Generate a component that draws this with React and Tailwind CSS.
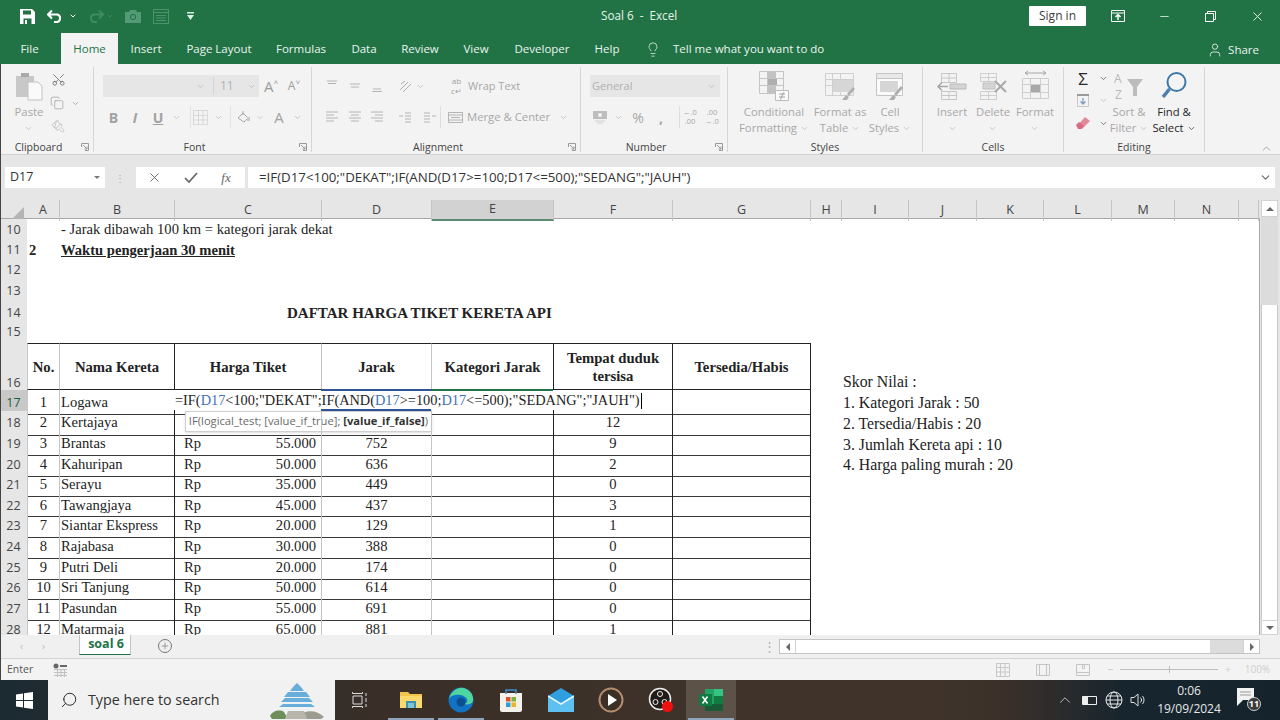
import {
  ChevronDown,
  ChevronUp,
  Copy,
  Lightbulb,
  Minus,
  Paintbrush,
  Plus,
  Scissors,
  Search,
  User,
  X,
} from "lucide-react"

const SERIF = "[font-family:'Liberation_Serif',serif]"
const COLS =
  "grid grid-cols-[27px_33px_115px_147px_110px_122px_119px_138px_31px_67px_68px_67px_68px_63px_64px_20px]"

const BORDER_A = "border-l border-l-[#c8c8c8] border-r border-r-[#c4c4c4]"
const BORDER_B = "border-r border-r-[#222]"
const BORDER_C = "border-r border-r-[#c4c4c4]"
const BORDER_D = "border-r border-r-[#c4c4c4]"
const BORDER_E = "border-r border-r-[#222]"
const BORDER_F = "border-r border-r-[#222]"
const BORDER_G = "border-r border-r-[#222]"

const TRAINS = [
  [3, "Brantas", "55.000", 752, 9],
  [4, "Kahuripan", "50.000", 636, 2],
  [5, "Serayu", "35.000", 449, 0],
  [6, "Tawangjaya", "45.000", 437, 3],
  [7, "Siantar Ekspress", "20.000", 129, 1],
  [8, "Rajabasa", "30.000", 388, 0],
  [9, "Putri Deli", "20.000", 174, 0],
  [10, "Sri Tanjung", "50.000", 614, 0],
  [11, "Pasundan", "55.000", 691, 0],
  [12, "Matarmaja", "65.000", 881, 1],
]

const SCORES = {
  17: "1. Kategori Jarak : 50",
  18: "2. Tersedia/Habis : 20",
  19: "3. Jumlah Kereta api : 10",
  20: "4. Harga paling murah : 20",
}

function Caret({ className = "text-[#b8b8b8]" }) {
  return <ChevronDown size={9} strokeWidth={2} className={className} />
}

function Slot({ className = "", children }) {
  return <div className={`flex shrink-0 items-center justify-center ${className}`}>{children}</div>
}

function Lines({ rows, color = "#b4b4b4", size = 14 }) {
  return (
    <svg width={size} height={size} viewBox="0 0 14 14" stroke={color} strokeWidth="1">
      {rows.map(([a, b, y]) => (
        <line key={`${a}-${y}`} x1={a} x2={b} y1={y} y2={y} />
      ))}
    </svg>
  )
}

function Launcher() {
  return (
    <svg width="8" height="8" viewBox="0 0 8 8" fill="none" stroke="#9a9a9a" strokeWidth="1">
      <path d="M.5 4V.5H7.5V7.5H4M2 2l4 4M6 3.5V6H3.5" />
    </svg>
  )
}

function Group({ className, pad = "", label, launcher, children }) {
  return (
    <div className={`mt-[3px] h-[85px] shrink-0 border-r border-r-[#d6d6d6] ${className}`}>
      <div className={`flex h-[73px] flex-col ${pad}`}>{children}</div>
      <div className={`relative h-[12px] text-center text-[10.5px] leading-[14px] text-[#444] ${launcher ? "pr-[16px]" : ""}`}>
        {label}
        {launcher && (
          <span className="absolute right-[4px] top-[3px] flex">
            <Launcher />
          </span>
        )}
      </div>
    </div>
  )
}

function BigButton({ className, icon, lines, caret, dark }) {
  const color = dark ? "text-[#262626]" : "text-[#a8a8a8]"
  return (
    <div className={`flex shrink-0 flex-col items-center ${className}`}>
      <div className="flex h-[37px] items-center justify-center">{icon}</div>
      <div className={`text-center text-[11.3px] leading-[16px] whitespace-nowrap ${color}`}>
        {lines.map((line, i) => (
          <div key={line} className="flex items-center justify-center gap-[3px]">
            {line}
            {caret && i === lines.length - 1 && <Caret className={dark ? "text-[#444]" : "text-[#b8b8b8]"} />}
          </div>
        ))}
        {lines.length === 1 && (
          <div className="flex h-[16px] items-center justify-center">
            <Caret />
          </div>
        )}
      </div>
    </div>
  )
}

function GridIcon({ children, w = 32, h = 32 }) {
  return (
    <svg width={w} height={h} viewBox="0 0 32 32" fill="none">
      {children}
    </svg>
  )
}

function TitleBar() {
  return (
    <div className="flex h-8 shrink-0 items-center text-[#e8f3ec]">
      <div className="flex w-[601px] items-center">
        <Slot className="ml-[19px] w-4">
          <svg width="15" height="15" viewBox="0 0 15 15">
            <path d="M0 0h12l3 3v12H0z" fill="#fff" />
            <path d="M3 1.5h8v4H3zM3.5 9.5h8V15h-8z" fill="#217346" />
            <path d="M5 11h2v4H5z" fill="#fff" />
          </svg>
        </Slot>
        <svg className="ml-[12px]" width="16" height="14" viewBox="0 0 16 14" fill="none" stroke="#fff" strokeWidth="2">
          <path d="M1.5 5.5h9a4 4 0 0 1 0 7.5H7M5 1.5l-4 4 4 4" />
        </svg>
        <Slot className="ml-[5px] w-[10px]">
          <ChevronDown size={8} strokeWidth={3} className="text-white" />
        </Slot>
        <svg className="ml-[10px]" width="16" height="14" viewBox="0 0 16 14" fill="none" stroke="#3f8a62" strokeWidth="2">
          <path d="M14.5 5.5h-9a4 4 0 0 0 0 7.5H9M11 1.5l4 4-4 4" />
        </svg>
        <Slot className="ml-[2px] w-[8px]">
          <ChevronDown size={8} strokeWidth={3} className="text-[#3f8a62]" />
        </Slot>
        <svg className="ml-[11px]" width="16" height="13" viewBox="0 0 16 13" fill="#559a77">
          <path d="M0 2h4l1-2h6l1 2h4v11H0z" />
          <circle cx="8" cy="7" r="3" fill="#217346" />
          <circle cx="8" cy="7" r="2" />
        </svg>
        <svg className="ml-[12px]" width="16" height="15" viewBox="0 0 16 15" fill="none" stroke="#4c9470" strokeWidth="1">
          <path d="M.5.5h15v14H.5zM.5 3.500h15M3 6.500h10M3 9h10M3 11.500h10" />
        </svg>
        <svg className="ml-[18px]" width="7" height="8" viewBox="0 0 7 8" fill="#dcefe4">
          <path d="M0 0h7v1.500H0zM0 3h7L3.500 8z" />
        </svg>
      </div>
      <div className="text-[11.7px] whitespace-pre">Soal 6  -  Excel</div>
      <div className="ml-auto flex items-center">
        <div className="flex h-[20px] w-[57px] items-center justify-center rounded-[1px] bg-white text-[12px] text-[#3c3c3c]">
          Sign in
        </div>
        <Slot className="ml-[21px] w-[22px]">
          <svg width="14" height="12" viewBox="0 0 14 12" fill="none" stroke="#fff">
            <path d="M.5.5h13v11H.5zM.5 3h13" />
            <path d="M7 10V5M4.500 7L7 4.500 9.500 7" strokeWidth="1.500" />
          </svg>
        </Slot>
        <Slot className="ml-[24px] w-[22px]">
          <Minus size={13} strokeWidth={1.5} />
        </Slot>
        <Slot className="ml-[24px] w-[22px]">
          <svg width="11" height="11" viewBox="0 0 11 11" fill="none" stroke="#fff">
            <path d="M.5 2.500h8v8h-8zM2.500 2.500v-2h8v8h-2" />
          </svg>
        </Slot>
        <Slot className="ml-[25px] mr-[12px] w-[22px]">
          <X size={15} strokeWidth={1.5} />
        </Slot>
      </div>
    </div>
  )
}

function Tab({ className = "", children }) {
  return <div className={`flex h-full shrink-0 items-center justify-center ${className}`}>{children}</div>
}

function TabBar() {
  return (
    <div className="flex h-8 shrink-0 items-end text-[11.5px] text-[#eaf4ee]">
      <div className="flex h-[32px] items-center">
        <Tab className="w-[59px] pt-[2px]">File</Tab>
        <Tab className="ml-[2px] mt-[2px] h-[30px] w-[57px] bg-[#f3f3f3] text-[#217346]">Home</Tab>
        <Tab className="w-[56px] pt-[2px]">Insert</Tab>
        <Tab className="w-[90px] pt-[2px]">Page Layout</Tab>
        <Tab className="w-[74px] pt-[2px]">Formulas</Tab>
        <Tab className="w-[52px] pt-[2px]">Data</Tab>
        <Tab className="w-[60px] pt-[2px]">Review</Tab>
        <Tab className="w-[52px] pt-[2px]">View</Tab>
        <Tab className="w-[80px] pt-[2px]">Developer</Tab>
        <Tab className="w-[50px] pt-[2px]">Help</Tab>
        <Tab className="ml-[13px] w-[16px] pt-[2px]">
          <Lightbulb size={19} strokeWidth={1.1} />
        </Tab>
        <div className="ml-[12px] whitespace-nowrap pt-[2px]">Tell me what you want to do</div>
      </div>
      <div className="ml-auto mr-[21px] flex h-[32px] items-center gap-[5px] pt-[3px]">
        <User size={16} strokeWidth={1.25} />
        Share
      </div>
    </div>
  )
}

function ClipboardGroup() {
  return (
    <Group className="w-[94px]" pad="pl-[12px] pr-[8px]" label="Clipboard" launcher>
      <div className="flex">
        <BigButton
          className="w-[34px]"
          lines={["Paste"]}
          icon={
            <svg width="30" height="30" viewBox="0 0 30 30">
              <path d="M2 5h18v21H2z" fill="#c8c8c8" />
              <path d="M7 2h8v4H7z" fill="#a9a9a9" />
              <path d="M14 11h10l4 4v14H14z" fill="#fafafa" stroke="#c2c2c2" />
            </svg>
          }
        />
        <div className="ml-[4px] flex flex-col items-start">
          <Slot className="mt-[2px] h-[20px] w-[16px]">
            <Scissors size={15} strokeWidth={1.25} className="-rotate-90 text-[#666]" />
          </Slot>
          <div className="mt-[4px] flex h-[20px] items-center gap-[7px]">
            <Copy size={14} strokeWidth={1} className="text-[#8c8c8c]" />
            <Caret className="text-[#999]" />
          </div>
          <Slot className="mt-[3px] h-[20px] w-[16px]">
            <Paintbrush size={14} strokeWidth={1.25} className="rotate-90 text-[#b5b5b5]" />
          </Slot>
        </div>
      </div>
    </Group>
  )
}

function FontGroup() {
  return (
    <Group className="w-[218px]" pad="pl-[9px]" label="Font" launcher>
      <div className="mt-[8px] flex h-[22px]">
        <div className="flex h-[22px] w-[156px] items-center justify-end bg-[#e6e6e6] pr-[3px] text-[12px] text-[#b4b4b4]">
          <Caret />
          <span className="ml-[8px] w-[34px] border-l border-l-[#d4d4d4] pl-[6px]">11</span>
          <Caret />
        </div>
        <Slot className="w-[24px] text-[15px] text-[#9c9c9c]">
          A<span className="-mt-[8px] text-[8px]">˄</span>
        </Slot>
        <Slot className="w-[22px] text-[12px] text-[#9c9c9c]">
          A<span className="-mt-[8px] text-[8px]">˅</span>
        </Slot>
      </div>
      <div className="mt-[9px] flex h-[22px] text-[#a2a2a2]">
        <Slot className="w-[21px] text-[14px] font-bold">B</Slot>
        <Slot className="w-[22px] text-[14px] font-bold italic">I</Slot>
        <Slot className="w-[24px] text-[14px] font-bold underline">U</Slot>
        <Slot className="w-[12px]">
          <Caret />
        </Slot>
        <Slot className="ml-[8px] w-[20px] border-l border-l-[#e2e2e2]">
          <svg width="15" height="15" viewBox="0 0 15 15" fill="none" stroke="#c0c0c0" strokeDasharray="1 1">
            <path d="M.5.5h14v14H.5zM5.500.5v14M10 .5v14M.5 5.500h14M.5 10h14" />
          </svg>
        </Slot>
        <Slot className="w-[16px]">
          <Caret />
        </Slot>
        <Slot className="ml-[4px] w-[26px] border-l border-l-[#e2e2e2]">
          <svg width="15" height="15" viewBox="0 0 15 15" fill="none" stroke="#a8a8a8">
            <path d="M2 8l5-5 5 5-4 4z" />
            <path d="M7 1v4" />
            <rect x="11" y="7" width="3" height="4" fill="#c9c9c9" stroke="none" />
          </svg>
        </Slot>
        <Slot className="w-[8px]">
          <Caret />
        </Slot>
        <Slot className="ml-[2px] w-[26px] text-[15px]">A</Slot>
        <Slot className="w-[10px]">
          <Caret />
        </Slot>
      </div>
    </Group>
  )
}

const TOP = [[2, 12, 2], [3, 11, 4.5]]
const MIDDLE = [[2, 12, 5], [3, 11, 8]]
const BOTTOM = [[3, 11, 10], [2, 12, 12.5]]
const LEFT = [[1, 13, 2], [1, 9, 5], [1, 13, 8], [1, 9, 11]]
const CENTER = [[1, 13, 2], [3, 11, 5], [1, 13, 8], [3, 11, 11]]
const RIGHT = [[1, 13, 2], [5, 13, 5], [1, 13, 8], [5, 13, 11]]

function AlignmentGroup() {
  return (
    <Group className="w-[269px]" pad="pl-[9px]" label="Alignment" launcher>
      <div className="mt-[8px] flex h-[22px]">
        <Slot className="w-[22px]"><Lines rows={TOP} /></Slot>
        <Slot className="w-[23px]"><Lines rows={MIDDLE} /></Slot>
        <Slot className="w-[22px]"><Lines rows={BOTTOM} /></Slot>
        <Slot className="ml-[9px] w-[16px]">
          <svg width="15" height="15" viewBox="0 0 15 15" fill="none" stroke="#b0b0b0">
            <path d="M2 11L10 3M5 13l8-8M3 5l4-3" />
          </svg>
        </Slot>
        <Slot className="w-[14px]"><Caret /></Slot>
        <Slot className="ml-[22px] w-[15px] text-[8px] leading-[10px] text-[#9e9e9e]">
          <span className="text-center">ab<br />c↵</span>
        </Slot>
        <span className="ml-[4px] flex items-center text-[11px] text-[#a8a8a8]">Wrap Text</span>
      </div>
      <div className="mt-[9px] flex h-[22px]">
        <Slot className="w-[22px]"><Lines rows={LEFT} /></Slot>
        <Slot className="w-[23px]"><Lines rows={CENTER} /></Slot>
        <Slot className="w-[22px]"><Lines rows={RIGHT} /></Slot>
        <Slot className="ml-[6px] w-[22px]">
          <Lines rows={[[7, 13, 3], [7, 13, 6], [7, 13, 9], [1, 5, 6], [7, 13, 12]]} />
        </Slot>
        <Slot className="ml-[3px] w-[22px] border-r border-r-[#dedede]">
          <Lines rows={[[1, 7, 3], [1, 7, 6], [1, 7, 9], [9, 13, 6], [1, 7, 12]]} />
        </Slot>
        <Slot className="ml-[7px] w-[15px]">
          <svg width="15" height="15" viewBox="0 0 15 15" fill="none" stroke="#b4b4b4">
            <path d="M.5 2.500h14v10H.5zM.5 5h14M.5 10h14M3 7.500h9" />
          </svg>
        </Slot>
        <span className="ml-[4px] flex w-[84px] items-center text-[11.3px] whitespace-nowrap text-[#a8a8a8]">Merge &amp; Center</span>
        <Slot className="ml-[8px] w-[9px]"><Caret /></Slot>
      </div>
    </Group>
  )
}

function NumberGroup() {
  return (
    <Group className="w-[147px]" pad="pl-[9px]" label="Number" launcher>
      <div className="mt-[8px] flex h-[22px] w-[130px] items-center justify-between bg-[#e6e6e6] pl-[2px] pr-[4px] text-[11px] text-[#b0b0b0]">
        General
        <Caret />
      </div>
      <div className="mt-[9px] flex h-[22px] text-[#a8a8a8]">
        <Slot className="w-[20px]">
          <svg width="16" height="14" viewBox="0 0 16 14">
            <path d="M1 1h14v8H1z" fill="#bdbdbd" />
            <circle cx="8" cy="5" r="2" fill="#f3f3f3" />
            <path d="M3 11h10M5 13h6" stroke="#d0d0d0" />
          </svg>
        </Slot>
        <Slot className="w-[16px]"><Caret /></Slot>
        <Slot className="ml-[1px] w-[22px] text-[14px]">%</Slot>
        <Slot className="ml-[1px] w-[22px] text-[14px] font-bold">,</Slot>
        <Slot className="ml-[2px] w-[6px] border-r border-r-[#dedede]" />
        <Slot className="w-[20px] text-[7.5px] leading-[9.5px]"><span className="text-center">←.0<br />.00</span></Slot>
        <Slot className="ml-[2px] w-[20px] text-[7.5px] leading-[9.5px]"><span className="text-center">.00<br />→.0</span></Slot>
      </div>
    </Group>
  )
}

function StylesGroup() {
  return (
    <Group className="w-[195px]" pad="pl-[9px]" label="Styles">
      <div className="flex">
        <BigButton
          className="w-[74px]"
          caret
          lines={["Conditional", "Formatting"]}
          icon={
            <GridIcon>
              <path d="M1.500 1.500h24v22h-24zM1.500 8.500h24M1.500 15.500h24M9.500 1.500v22M17.500 1.500v22" stroke="#c4c4c4" />
              <path d="M10 2h7v6h-7zM10 16h7v7h-7z" fill="#c2c2c2" />
              <path d="M10 9h9v6h-9z" fill="#aeaeae" />
              <path d="M17.500 20.500h13v10h-13z" fill="#fafafa" stroke="#bcbcbc" />
              <path d="M21 24h6M21 27h6M25.500 22.500l-3 7" stroke="#a0a0a0" />
            </GridIcon>
          }
        />
        <BigButton
          className="w-[58px]"
          caret
          lines={["Format as", "Table"]}
          icon={
            <GridIcon>
              <path d="M1.500 3.500h28v22h-28zM1.500 9.500h28M1.500 15.500h28M8.500 3.500v22M16.500 3.500v22" stroke="#cfcfcf" />
              <path d="M9 10h20v12H9z" fill="#d6d6d6" />
              <path d="M18 30l4-5 3 2-2 3zM23 24l6-7 2 2-6 7z" fill="#b0b0b0" />
            </GridIcon>
          }
        />
        <BigButton
          className="w-[42px]"
          caret
          lines={["Cell", "Styles"]}
          icon={
            <GridIcon>
              <path d="M2.500 3.500h26v22h-26z" fill="#fafafa" stroke="#c4c4c4" />
              <path d="M2.500 3.500h26v5h-26z" fill="#e8e8e8" stroke="#c4c4c4" />
              <path d="M6 11h18v11H6z" fill="#d6d6d6" />
              <path d="M15 30l4-5 3 2-2 3zM20 24l7-8 2 2-7 8z" fill="#adadad" />
            </GridIcon>
          }
        />
      </div>
    </Group>
  )
}

function CellsGroup() {
  return (
    <Group className="w-[141px]" pad="pl-[9px]" label="Cells">
      <div className="flex">
        <BigButton
          className="w-[40px]"
          lines={["Insert"]}
          icon={
            <GridIcon>
              <path d="M5.500 3.500h15v9h-15zM5.500 21.500h15v8h-15zM13 3.500v9M13 21.500v8M5.500 8h15M5.500 25.500h15" stroke="#c6c6c6" />
              <path d="M14 14h16v5H14z" fill="#d4d4d4" stroke="#b8b8b8" />
              <path d="M12 16.500H2M6 12.500l-4 4 4 4" stroke="#a8a8a8" strokeWidth="1.500" />
            </GridIcon>
          }
        />
        <BigButton
          className="w-[42px]"
          lines={["Delete"]}
          icon={
            <GridIcon>
              <path d="M3.500 3.500h16v8h-16zM3.500 21.500h16v8h-16zM11.500 3.500v8M11.500 21.500v8M3.500 25.500h16M3.500 7.500h16" stroke="#cecece" />
              <path d="M6 13h12v6H6z" fill="#d4d4d4" stroke="#c0c0c0" />
              <path d="M18 11l11 11M29 11L18 22" stroke="#a8a8a8" strokeWidth="2" />
            </GridIcon>
          }
        />
        <BigButton
          className="w-[42px]"
          lines={["Format"]}
          icon={
            <GridIcon>
              <path d="M3.500 8.500h26v20h-26zM3.500 14.500h26M3.500 22.500h26M11.500 8.500v20M21.500 8.500v20" stroke="#cecece" />
              <path d="M12 15h9v7h-9z" fill="#a8a8a8" />
              <path d="M6 3h21M9 1L6 3l3 2M24 1l3 2-3 2" stroke="#a8a8a8" />
            </GridIcon>
          }
        />
      </div>
    </Group>
  )
}

function EditingGroup() {
  return (
    <Group className="w-[141px]" pad="pl-[8px]" label="Editing">
      <div className="flex">
        <div className="w-[38px] pl-[3px]">
          <div className="flex h-[22px] items-center gap-[8px]">
            <span className="w-[16px] text-center text-[17px] leading-none text-[#262626]">Σ</span>
            <Caret className="text-[#555]" />
          </div>
          <div className="flex h-[22px] items-center gap-[8px]">
            <svg width="16" height="16" viewBox="0 0 16 16" fill="none">
              <path d="M2.500 2.500h11v12h-11z" stroke="#c8c8c8" />
              <path d="M2 2h12v2H2z" fill="#9a9a9a" />
              <path d="M8 6v6M5.500 9.500L8 12l2.500-2.500" stroke="#7d9ab8" strokeWidth="1.250" />
            </svg>
            <Caret />
          </div>
          <div className="flex h-[24px] items-center gap-[8px]">
            <svg width="16" height="14" viewBox="0 0 16 14">
              <path d="M10 1l5 4-8 8-5-3z" fill="#e08a9c" />
              <path d="M1 9l3-3 5 4-3 3H3z" fill="#d86a82" />
            </svg>
            <Caret className="text-[#555]" />
          </div>
        </div>
        <BigButton
          className="w-[38px]"
          caret
          lines={["Sort &", "Filter"]}
          icon={
            <svg width="32" height="30" viewBox="0 0 32 30">
              <text x="1" y="12" fontSize="12" fill="#b8b8b8" fontFamily="Open Sans">A</text>
              <text x="2" y="28" fontSize="12" fill="#b8b8b8" fontFamily="Open Sans">Z</text>
              <path d="M14 8h16l-6 8v9h-4v-9z" fill="#bcbcbc" />
            </svg>
          }
        />
        <BigButton
          className="w-[52px]"
          dark
          caret
          lines={["Find &", "Select"]}
          icon={
            <svg width="28" height="30" viewBox="0 0 28 30" fill="none">
              <circle cx="16.500" cy="11" r="9" stroke="#3f78a8" strokeWidth="2" />
              <path d="M9.500 18L3 26" stroke="#4a7fae" strokeWidth="3.500" />
            </svg>
          }
        />
      </div>
    </Group>
  )
}

function Ribbon() {
  return (
    <div className="relative flex h-[91px] shrink-0 border-b border-b-[#d2d2d2] bg-[#f3f3f3]">
      <ClipboardGroup />
      <FontGroup />
      <AlignmentGroup />
      <NumberGroup />
      <StylesGroup />
      <CellsGroup />
      <EditingGroup />
      <ChevronUp size={13} strokeWidth={1} className="absolute bottom-[-1px] right-[7px] text-[#666]" />
    </div>
  )
}

function FormulaBar() {
  return (
    <div className="flex h-[45px] shrink-0 bg-[#e6e6e6] pt-[12px]">
      <div className="ml-[5px] flex h-[21px] w-[100px] items-center justify-between bg-white pl-[5px] pr-[5px] text-[12.5px] text-[#333]">
        D17
        <svg width="6" height="3" viewBox="0 0 6 3" fill="#777"><path d="M0 0h6L3 3z" /></svg>
      </div>
      <div className="ml-[10px] mr-[11px] flex h-[21px] w-[10px] items-center justify-center text-[10px] leading-none text-[#aaa]">⋮</div>
      <div className="flex h-[21px] w-[109px] items-center bg-white text-[#666]">
        <Slot className="ml-[9px] w-[18px]"><X size={15} strokeWidth={1.5} /></Slot>
        <Slot className="ml-[19px] w-[18px]">
          <svg width="14" height="12" viewBox="0 0 14 12" fill="none" stroke="#666" strokeWidth="1.750">
            <path d="M1 6l4 4 8-9" />
          </svg>
        </Slot>
        <Slot className="ml-[17px] w-[18px] text-[13px] italic [font-family:'Liberation_Serif',serif]">fx</Slot>
      </div>
      <div className="ml-[3px] flex h-[21px] w-[1027px] items-center justify-between bg-white pl-[11px] pr-[3px] text-[13.3px] text-[#333]">
        <span className="whitespace-nowrap">=IF(D17&lt;100;"DEKAT";IF(AND(D17&gt;=100;D17&lt;=500);"SEDANG";"JAUH")</span>
        <ChevronDown size={13} strokeWidth={2} className="text-[#666]" />
      </div>
    </div>
  )
}

function ColumnHeader() {
  const letters = ["A", "B", "C", "D", "E", "F", "G", "H", "I", "J", "K", "L", "M", "N", ""]
  return (
    <div className={`${COLS} h-[19px] border-b border-b-[#a8a8a8] bg-[#e6e6e6]`}>
      <div className="flex items-end justify-end pb-[2px] pr-[3px]">
        <svg width="12" height="12" viewBox="0 0 12 12" fill="#b4b4b4"><path d="M12 0v12H0z" /></svg>
      </div>
      {letters.map((letter) => (
        <div
          key={letter}
          className={`flex items-center justify-center border-r border-r-[#c4c4c4] text-[12.5px] text-[#444] ${
            letter === "E" ? "border-b-2 border-b-[#5f8a72] bg-[#d2d2d2]" : ""
          }`}
        >
          {letter}
        </div>
      ))}
    </div>
  )
}

function RowHead({ active, bottom, className = "", children }) {
  return (
    <div
      className={`flex justify-center text-[12.5px] [font-family:'Open_Sans',sans-serif] ${
        bottom ? "items-end leading-[15px]" : "items-center"
      } ${active ? "bg-[#c8c8c8] text-[#1d5c3a]" : "bg-[#e6e6e6] text-[#444]"} ${className}`}
    >
      {children}
    </div>
  )
}

// plain rows above the table, cells are spilling text
function PlainRow({ n, a, b, c }) {
  return (
    <div className={`${COLS} h-[20.7px]`}>
      <RowHead>{n}</RowHead>
      <div className="flex items-center pl-[2px] font-bold whitespace-nowrap">{a}</div>
      <div className="flex items-center pl-[1px] whitespace-nowrap">{b}</div>
      <div className="flex items-center pb-[1px] pl-[112px] text-[15px] font-bold whitespace-nowrap">{c}</div>
    </div>
  )
}

function HeaderCell({ className, children }) {
  return (
    <div className={`flex items-center justify-center border-y border-y-[#222] pt-[1px] text-center text-[14.7px] leading-[18px] font-bold ${className}`}>
      {children}
    </div>
  )
}

function DataRow({ n, no, name, price, dist, seats, extra }) {
  const cell = "flex items-center border-b border-b-[#3a3a3a] pt-[1px] whitespace-nowrap"
  return (
    <div className={`${COLS} relative h-[20.7px]`}>
      <RowHead active={n === 17} className="pt-[1px]">{n}</RowHead>
      <div className={`${cell} ${BORDER_A} justify-center`}>{no}</div>
      <div className={`${cell} ${BORDER_B} pl-[1px]`}>{name}</div>
      <div className={`${cell} ${BORDER_C} justify-between pl-[9px] pr-[5px]`}>
        {price && <span>Rp</span>}
        {price && <span>{price}</span>}
      </div>
      <div className={`${cell} ${BORDER_D} justify-center`}>{dist}</div>
      <div className={`${cell} ${BORDER_E}`} />
      <div className={`${cell} ${BORDER_F} justify-center`}>{seats}</div>
      <div className={`${cell} ${BORDER_G}`} />
      <div />
      <div className="flex items-center pl-[1px] pt-[1px] text-[15.8px] whitespace-nowrap">{SCORES[n]}</div>
      {extra}
    </div>
  )
}

function EditingCell() {
  return (
    <>
      <div className="absolute left-[174px] top-0 flex h-[20px] w-[470px] items-center bg-white pl-[1px] pt-[2px] text-[14.35px] whitespace-nowrap">
        <span>
          =IF(<span className="text-[#3f6fb5]">D17</span>&lt;100;"DEKAT";IF(AND(<span className="text-[#3f6fb5]">D17</span>&gt;=100;<span className="text-[#3f6fb5]">D17</span>&lt;=500);"SEDANG";"JAUH")
        </span>
        <span className="ml-[1px] h-[16px] w-px bg-black" />
      </div>
      <div className="absolute left-[321px] top-[-1px] h-[22px] w-[110px] border-y-2 border-y-[#2f5597]" />
      <div className="absolute left-[431px] top-[-1px] h-[2px] w-[122px] bg-[#217346]" />
      <div className="absolute left-[185px] top-[21px] flex h-[21px] w-[247px] items-center justify-center border border-[#cfcfcf] bg-white text-[11.2px] whitespace-nowrap text-[#6a6a6a] shadow-sm [font-family:'Open_Sans',sans-serif]">
        IF(logical_test; [value_if_true];&nbsp;<b className="text-[#333]">[value_if_false]</b>)
      </div>
    </>
  )
}

function Sheet() {
  return (
    <div className={`h-[416px] overflow-hidden border-r border-r-[#a8a8a8] bg-white ${SERIF} text-[14.6px] text-[#222]`}>
      <PlainRow n={10} b="- Jarak dibawah 100 km = kategori jarak dekat" />
      <PlainRow n={11} a="2" b={<span className="font-bold underline">Waktu pengerjaan 30 menit</span>} />
      <PlainRow n={12} />
      <PlainRow n={13} />
      <PlainRow n={14} c="DAFTAR HARGA TIKET KERETA API" />
      <PlainRow n={15} />
      <div className={`${COLS} h-[47px]`}>
        <RowHead bottom>16</RowHead>
        <HeaderCell className={BORDER_A}>No.</HeaderCell>
        <HeaderCell className={BORDER_B}>Nama Kereta</HeaderCell>
        <HeaderCell className={BORDER_C}>Harga Tiket</HeaderCell>
        <HeaderCell className={BORDER_D}>Jarak</HeaderCell>
        <HeaderCell className={BORDER_E}>Kategori Jarak</HeaderCell>
        <HeaderCell className={BORDER_F}>Tempat duduk<br />tersisa</HeaderCell>
        <HeaderCell className={BORDER_G}>Tersedia/Habis</HeaderCell>
        <div />
        <div className="flex items-end pl-[1px] text-[15.8px] leading-[17px] whitespace-nowrap">Skor Nilai :</div>
      </div>
      <DataRow n={17} no={1} name="Logawa" extra={<EditingCell />} />
      <DataRow n={18} no={2} name="Kertajaya" seats={12} />
      {TRAINS.map(([no, name, price, dist, seats]) => (
        <DataRow key={no} n={no + 16} no={no} name={name} price={price} dist={dist} seats={seats} />
      ))}
    </div>
  )
}

function ScrollBtn({ className = "", path }) {
  return (
    <div className={`flex shrink-0 items-center justify-center border border-[#d2d2d2] bg-white ${className}`}>
      <svg width="8" height="8" viewBox="0 0 8 8" fill="#666"><path d={path} /></svg>
    </div>
  )
}

function Grid() {
  return (
    <div className="flex h-[435px] shrink-0 bg-[#e6e6e6]">
      <div className="w-[1260px] shrink-0">
        <ColumnHeader />
        <Sheet />
      </div>
      <div className="ml-px flex w-[17px] flex-col">
        <ScrollBtn className="h-[17px]" path="M4 2l4 4H0z" />
        <div className="h-[88px] bg-[#dcdcdc]" />
        <div className="flex-1 border-x border-x-[#c8c8c8] bg-white" />
        <ScrollBtn className="h-[15px]" path="M0 2h8L4 6z" />
      </div>
    </div>
  )
}

function SheetTabs() {
  return (
    <div className="flex h-[23px] shrink-0 items-start bg-[#f0f0f0] text-[#bbb]">
      <span className="ml-[20px] mt-[4px] w-[4px] text-[10px] leading-[14px]">‹</span>
      <span className="ml-[18px] mt-[4px] w-[4px] text-[10px] leading-[14px]">›</span>
      <div className="ml-[33px] flex h-[20px] w-[52px] shrink-0 items-center justify-center border-x border-b border-x-[#c4c4c4] border-b-[#217346] bg-white pl-[2px] text-[12.5px] font-bold text-[#217346]">
        soal 6
      </div>
      <div className="ml-[27px] mt-[4px] flex h-[14px] w-[14px] shrink-0 items-center justify-center rounded-full border border-[#777]">
        <Plus size={10} strokeWidth={1.25} className="text-[#555]" />
      </div>
      <span className="ml-[591px] mt-[3px] w-[6px] text-center text-[13px] leading-[16px] text-[#b4b4b4]">⋮</span>
      <div className="ml-[10px] mt-[4px] flex h-[15px] w-[481px] shrink-0 border border-[#c4c4c4] bg-white">
        <ScrollBtn className="h-full w-[16px] border-y-0 border-l-0" path="M6 0v8L2 4z" />
        <div className="flex-1" />
        <div className="w-[33px] bg-[#dcdcdc]" />
        <ScrollBtn className="h-full w-[16px] border-y-0 border-r-0" path="M2 0v8l4-4z" />
      </div>
    </div>
  )
}

function StatusBar() {
  return (
    <div className="flex h-[22px] shrink-0 items-center border-t border-t-[#d4d4d4] bg-[#f3f3f3] text-[10.5px] text-[#555]">
      <span className="ml-[7px] w-[46px]">Enter</span>
      <svg width="14" height="14" viewBox="0 0 14 14">
        <circle cx="3" cy="3" r="2.500" fill="#666" />
        <path d="M7 2h7v2H7z" fill="#666" />
        <path d="M1 6.500h13M1 9.500h13M1 12.500h13M4.500 6v8M8 6v8M11.500 6v8" stroke="#c0c0c0" />
      </svg>
      <svg className="ml-[929px]" width="14" height="14" viewBox="0 0 14 14" fill="none" stroke="#c8c8c8">
        <path d="M.5.5h13v13H.5zM.5 4.500h13M.5 9h13M4.500.5v13M9 .5v13" />
      </svg>
      <svg className="ml-[26px]" width="14" height="14" viewBox="0 0 14 14" fill="none" stroke="#c4c4c4">
        <path d="M.5 1.500h13v11H.5zM3.500 1.500v11M10.500 1.500v11" />
      </svg>
      <svg className="ml-[26px]" width="14" height="14" viewBox="0 0 14 14" fill="none" stroke="#c4c4c4">
        <path d="M.5 1.500h13v11H.5zM.5 9.500h13M6.500 1.500v4h2v-4" />
      </svg>
      <span className="ml-[18px] h-px w-[5px] bg-[#cfcfcf]" />
      <div className="relative ml-[7px] h-px w-[98px] bg-[#bdbdbd]">
        <span className="absolute left-[49px] top-[-3px] h-[7px] w-px bg-[#bdbdbd]" />
      </div>
      <span className="ml-[7px] text-[10px] text-[#cfcfcf]">+</span>
      <span className="ml-[14px] text-[10px] text-[#cfcfcf]">100%</span>
    </div>
  )
}

function TaskIcon({ children, active, underline }) {
  return (
    <div className={`relative flex h-full w-[50px] shrink-0 items-center justify-center ${active ? "bg-[#5c5248]" : ""}`}>
      {children}
      {underline && <span className="absolute bottom-0 left-[2px] right-[2px] h-[2px] bg-[#8fa5bd]" />}
    </div>
  )
}

function Pagoda() {
  return (
    <svg className="ml-auto mr-[9px] mt-[2px]" width="58" height="36" viewBox="0 0 58 36">
      <path d="M2 33c2-5 10-7 14-4l4 7H4z" fill="#6f8f5a" />
      <path d="M34 30c8-3 16-2 22 4l-3 2H34z" fill="#9c9c92" />
      <path d="M20 28c4-2 12-2 16 0l3 8H17z" fill="#b8b6ac" />
      <path d="M21 8h16v6H21zM18 15h22v6H18zM16 21h26v7H16z" fill="#eef2f5" />
      <path d="M25 4l4-4 4 4 3 4H22zM20 9h18l4 5H16zM17 15h24l4 4H13zM15 21h28l4 3H11z" fill="#69addb" />
    </svg>
  )
}

function Taskbar() {
  return (
    <div className="flex h-10 shrink-0 items-stretch bg-[linear-gradient(90deg,#1c2a32_0%,#3a2f28_30%,#40342a_70%,#3c3129_78%,#17252e_88%,#14232c_100%)]">
      <div className="flex w-[48px] items-center justify-center">
        <svg width="17" height="17" viewBox="0 0 17 17" fill="#fff">
          <path d="M0 2.500l7-1V8H0zM8 1.300L17 0v8H8zM0 9h7v6.500l-7-1zM8 9h9v8l-9-1.300z" />
        </svg>
      </div>
      <div className="flex h-full w-[287px] items-center bg-[#f1f1f1] text-[14.3px] text-[#333]">
        <Search size={18} strokeWidth={1.25} className="ml-[12px] -scale-x-100 text-[#222]" />
        <span className="ml-[10px] whitespace-nowrap">Type here to search</span>
        <Pagoda />
      </div>
      <div className="ml-[1px] flex">
        <TaskIcon>
          <svg className="mr-[2px]" width="18" height="18" viewBox="0 0 18 18" fill="none" stroke="#ddd">
            <path d="M1.500 1v1.500h10V1M1.500 17v-1.500h10V17M2 5h9v8H2zM15 2v3M15 7v4M15 13v3" />
          </svg>
        </TaskIcon>
        <TaskIcon underline>
          <svg width="22" height="20" viewBox="0 0 22 20">
            <path d="M0 2h8l2 2h12v14H0z" fill="#f2c54b" />
            <path d="M0 6h22v12H0z" fill="#fbd96d" />
            <path d="M6 11h10v7H6z" fill="#3c8fb5" />
            <path d="M8 13h6v5H8z" fill="#7fc4cf" />
          </svg>
        </TaskIcon>
        <TaskIcon underline>
          <svg width="26" height="26" viewBox="0 0 26 26">
            <circle cx="13" cy="13" r="12.500" fill="#1273c4" />
            <path d="M1 12C3 4 10 0 15 1c6 1 11 6 10 13-1 3-5 4-9 3 3-1 4-3 3-5-3-5-15-6-18 0z" fill="#4fd6a0" />
            <circle cx="13" cy="15" r="4.500" fill="#0b4f91" />
          </svg>
        </TaskIcon>
        <TaskIcon>
          <svg width="24" height="24" viewBox="0 0 24 24">
            <path d="M1 5h22v17a2 2 0 0 1-2 2H3a2 2 0 0 1-2-2z" fill="#f4f0ea" />
            <path d="M7 6V2h10v4" fill="none" stroke="#3d8fd0" strokeWidth="1.500" />
            <path d="M7 9h4.500v4.500H7z" fill="#d9532c" />
            <path d="M12.500 9H17v4.500h-4.500z" fill="#7db33a" />
            <path d="M7 14.500h4.500V19H7z" fill="#2c9fd9" />
            <path d="M12.500 14.500H17V19h-4.500z" fill="#f0b429" />
          </svg>
        </TaskIcon>
        <TaskIcon>
          <svg width="26" height="24" viewBox="0 0 26 24">
            <path d="M13 0l13 8v16H0V8z" fill="#2f9fe0" />
            <path d="M0 8l13 8 13-8v16H0z" fill="#5cc0f0" />
            <path d="M0 8l13 8 13-8" fill="none" stroke="#e8f6ff" strokeWidth="1.500" />
          </svg>
        </TaskIcon>
        <TaskIcon>
          <svg width="26" height="26" viewBox="0 0 26 26">
            <circle cx="13" cy="13" r="11.500" fill="#3a3028" stroke="#b68d6c" strokeWidth="2" />
            <path d="M10 7l9 6-9 6z" fill="#fff" />
          </svg>
        </TaskIcon>
        <TaskIcon>
          <svg width="26" height="26" viewBox="0 0 26 26">
            <circle cx="12" cy="12" r="10.500" fill="#221c18" stroke="#eee" strokeWidth="1.500" />
            <circle cx="12" cy="7" r="2.500" fill="none" stroke="#eee" />
            <circle cx="7.500" cy="15" r="2.500" fill="none" stroke="#eee" />
            <circle cx="16.500" cy="15" r="2.500" fill="none" stroke="#eee" />
            <circle cx="19.500" cy="19.500" r="5.500" fill="#f01010" />
          </svg>
        </TaskIcon>
        <TaskIcon active underline>
          <svg width="26" height="24" viewBox="0 0 26 24">
            <path d="M7 1h18v22H7z" fill="#21a366" />
            <path d="M16 1h9v7h-9z" fill="#33c481" />
            <path d="M16 8h9v8h-9z" fill="#107c41" />
            <path d="M7 16h18v7H7z" fill="#185c37" />
            <path d="M1 6h13v12H1z" fill="#107c41" />
            <path d="M4.500 8.500l5 7M9.500 8.500l-5 7" stroke="#fff" strokeWidth="1.500" />
          </svg>
        </TaskIcon>
      </div>
      <div className="ml-auto flex items-center text-[#e8e8e8]">
        <ChevronUp size={18} strokeWidth={1} />
        <svg className="ml-[8px]" width="16" height="9" viewBox="0 0 16 9" fill="none" stroke="#eee">
          <path d="M.5.5h14v8H.5z" />
          <path d="M1 1h5v7H1z" fill="#eee" stroke="none" />
        </svg>
        <svg className="ml-[7px]" width="18" height="18" viewBox="0 0 18 18" fill="none" stroke="#e8e8e8">
          <circle cx="9" cy="9" r="8" />
          <ellipse cx="9" cy="9" rx="4" ry="8" />
          <path d="M1 9h16M2 5h14M2 13h14" />
        </svg>
        <svg className="ml-[7px]" width="16" height="14" viewBox="0 0 16 14" fill="none" stroke="#ddd">
          <path d="M1 4.500h3L8 1v12L4 9.500H1zM10.500 4.500a3.500 3.500 0 0 1 0 5M12.500 3a6 6 0 0 1 0 8" />
        </svg>
        <div className="ml-[9px] w-[68px] text-center text-[12px] leading-[18px]">
          <div>0:06</div>
          <div>19/09/2024</div>
        </div>
        <div className="relative ml-[14px] mr-[19px] h-[24px] w-[24px]">
          <svg width="17" height="18" viewBox="0 0 17 18">
            <path d="M0 0h17v12H6l-6 6z" fill="#f2f2f2" />
            <path d="M3 4h11M3 7h11" stroke="#999" />
          </svg>
          <span className="absolute bottom-[1px] right-[0px] flex h-[14px] w-[14px] items-center justify-center rounded-full border border-[#ccc] bg-[#3a3a3a] text-[9px] font-bold text-white">
            11
          </span>
        </div>
      </div>
    </div>
  )
}

export default function App() {
  return (
    <div className="relative flex h-[720px] w-[1280px] flex-col overflow-hidden bg-[#217346] [font-family:'Open_Sans',sans-serif]">
      <TitleBar />
      <TabBar />
      <Ribbon />
      <FormulaBar />
      <Grid />
      <SheetTabs />
      <StatusBar />
      <Taskbar />
      <div className="absolute left-0 top-[64px] h-[616px] w-px bg-[#444]" />
    </div>
  )
}
